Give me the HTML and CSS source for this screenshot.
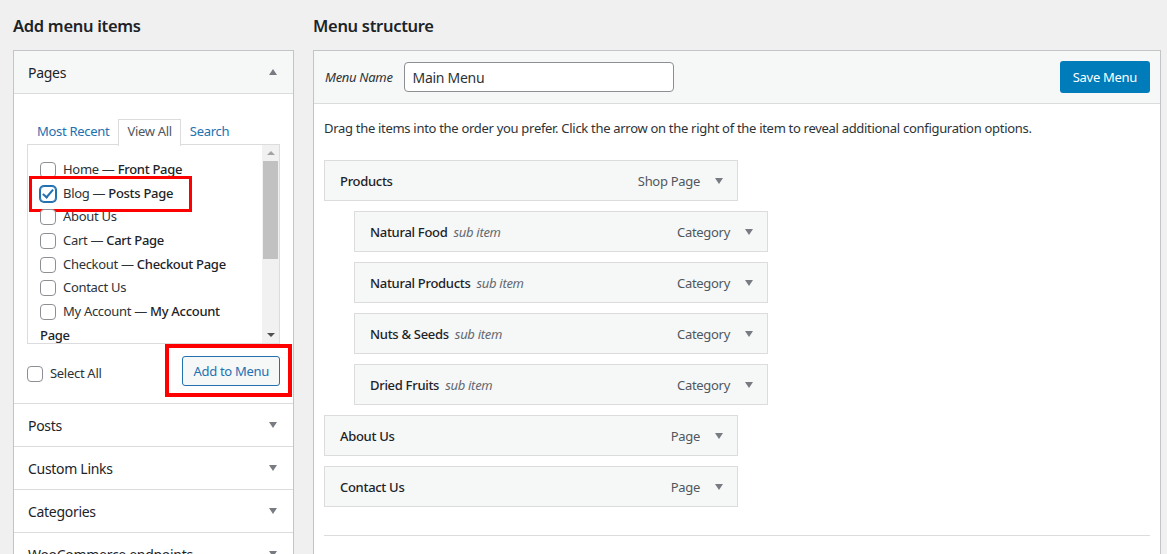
FILE: index.html
```html
<!DOCTYPE html>
<html lang="en">
<head>
    <meta charset="UTF-8">
    <title>Menus</title>
    <link rel="stylesheet" href="styles.css">
</head>
<body>
    <div class="wrap">
        <div class="side">
            <h2 class="col-title">Add menu items</h2>
            <div class="accordion">
                <div class="acc-title open">Pages <span class="arrow up"></span></div>
                <div class="acc-body">
                    <div class="tabs">
                        <span class="tab">Most Recent</span>
                        <span class="tab active">View All</span>
                        <span class="tab">Search</span>
                    </div>
                    <div class="checklist">
                        <ul class="pages">
                            <li><span class="cb"></span>Home — <b>Front Page</b></li>
                            <li class="marked"><span class="cb checked"></span>Blog — <b>Posts Page</b></li>
                            <li><span class="cb"></span>About Us</li>
                            <li><span class="cb"></span>Cart — <b>Cart Page</b></li>
                            <li><span class="cb"></span>Checkout — <b>Checkout Page</b></li>
                            <li><span class="cb"></span>Contact Us</li>
                            <li><span class="cb"></span>My Account — <b>My Account</b><br><b>Page</b></li>
                        </ul>
                        <div class="scrollbar">
                            <span class="sb-arrow sb-up"></span>
                            <span class="sb-thumb"></span>
                            <span class="sb-arrow sb-down"></span>
                        </div>
                    </div>
                    <div class="acc-actions">
                        <label class="select-all"><span class="cb"></span>Select All</label>
                        <div class="marked-btn">
                            <button class="btn-secondary">Add to Menu</button>
                        </div>
                    </div>
                </div>
                <div class="acc-title">Posts <span class="arrow"></span></div>
                <div class="acc-title">Custom Links <span class="arrow"></span></div>
                <div class="acc-title">Categories <span class="arrow"></span></div>
                <div class="acc-title">WooCommerce endpoints <span class="arrow"></span></div>
            </div>
        </div>

        <div class="main">
            <h2 class="col-title">Menu structure</h2>
            <div class="menu-box">
                <div class="menu-head">
                    <span class="menu-name-label">Menu Name</span>
                    <input class="menu-name" type="text" value="Main Menu">
                    <button class="btn-primary">Save Menu</button>
                </div>
                <div class="menu-body">
                    <p class="hint">Drag the items into the order you prefer. Click the arrow on the right of the item to reveal additional configuration options.</p>
                    <ul class="menu-items">
                        <li class="item"><span class="item-title">Products</span><span class="item-type">Shop Page</span><span class="arrow"></span></li>
                        <li class="item sub"><span class="item-title">Natural Food <i>sub item</i></span><span class="item-type">Category</span><span class="arrow"></span></li>
                        <li class="item sub"><span class="item-title">Natural Products <i>sub item</i></span><span class="item-type">Category</span><span class="arrow"></span></li>
                        <li class="item sub"><span class="item-title">Nuts &amp; Seeds <i>sub item</i></span><span class="item-type">Category</span><span class="arrow"></span></li>
                        <li class="item sub"><span class="item-title">Dried Fruits <i>sub item</i></span><span class="item-type">Category</span><span class="arrow"></span></li>
                        <li class="item"><span class="item-title">About Us</span><span class="item-type">Page</span><span class="arrow"></span></li>
                        <li class="item"><span class="item-title">Contact Us</span><span class="item-type">Page</span><span class="arrow"></span></li>
                    </ul>
                    <div class="menu-foot"></div>
                </div>
            </div>
        </div>
    </div>
</body>
</html>
```

FILE: styles.css
```css
body {
    margin: 0;
    background-color: #f0f0f1;
    color: #1d2327;
    font-family: 'Noto Sans', 'Open Sans', sans-serif;
    font-size: 13px;
    letter-spacing: -0.3px;
    overflow: hidden;
}

.wrap {
    display: flex;
    gap: 19px;
    padding: 0 6px 0 13px;
}

.side {
    width: 281px;
    flex-shrink: 0;
}

.main {
    flex: 1;
}

.col-title {
    margin: 0;
    height: 50px;
    display: flex;
    align-items: center;
    font-size: 16.5px;
    font-weight: 600;
}

/* accordion */

.accordion {
    background-color: #fff;
    border: 1px solid #c3c4c7;
    border-bottom: none;
}

.acc-title {
    height: 42px;
    display: flex;
    align-items: center;
    justify-content: space-between;
    padding: 0 16px 0 14px;
    font-size: 14px;
    border-bottom: 1px solid #dcdcde;
}

.acc-title.open {
    background-color: #f6f7f7;
}

.arrow {
    width: 0;
    height: 0;
    border-left: 4px solid transparent;
    border-right: 4px solid transparent;
    border-top: 6px solid #787c82;
}

.arrow.up {
    border-top: none;
    border-bottom: 6px solid #787c82;
}

.acc-body {
    padding: 25px 13px 0;
    border-bottom: 1px solid #dcdcde;
    height: 284px;
}

.tabs {
    display: flex;
    height: 25px;
    padding-left: 1px;
}

.tab {
    padding: 2px 8px 0;
    color: #2271b1;
    border: 1px solid transparent;
    border-bottom: none;
}

.tab.active {
    color: #50575e;
    background-color: #fff;
    border-color: #dcdcde;
    position: relative;
    height: 24px;
    z-index: 1;
    margin-bottom: -1px;
}

.checklist {
    border: 1px solid #dcdcde;
    height: 198px;
    display: flex;
    overflow: hidden;
    background-color: #fff;
}

.pages {
    list-style: none;
    margin: 0;
    padding: 13px 0 0 12px;
    flex: 1;
    color: #2c3338;
}

.pages li {
    height: 23.7px;
    line-height: 23.7px;
    white-space: nowrap;
}

.pages b {
    font-weight: 500;
    color: #1d2327;
}

.cb {
    display: inline-block;
    width: 16px;
    height: 16px;
    box-sizing: border-box;
    border: 1px solid #8c8f94;
    border-radius: 4px;
    background-color: #fff;
    vertical-align: -4px;
    margin-right: 7px;
    position: relative;
}

.cb.checked {
    border-color: #2271b1;
    box-shadow: 0 0 0 1px #2271b1;
}

.cb.checked::after {
    content: "";
    position: absolute;
    left: 4px;
    top: 0px;
    width: 4px;
    height: 9px;
    border-right: 2px solid #2271b1;
    border-bottom: 2px solid #2271b1;
    transform: rotate(40deg);
}

.marked {
    position: relative;
}

.marked::after {
    content: "";
    position: absolute;
    left: -11px;
    top: -6px;
    width: 157px;
    height: 30px;
    border: 3px solid #f00;
}

.scrollbar {
    width: 17px;
    background-color: #f1f1f1;
    display: flex;
    flex-direction: column;
    align-items: center;
}

.sb-arrow {
    width: 0;
    height: 0;
    border-left: 4px solid transparent;
    border-right: 4px solid transparent;
    margin: 6px 0;
}

.sb-up {
    border-bottom: 4px solid #a3a3a3;
}

.sb-down {
    border-top: 4px solid #505050;
    margin-top: auto;
}

.sb-thumb {
    width: 15px;
    height: 98px;
    background-color: #c1c1c1;
}

.acc-actions {
    display: flex;
    justify-content: space-between;
    align-items: center;
    height: 54px;
}

.select-all {
    color: #2c3338;
    padding-top: 3px;
}

.marked-btn {
    position: relative;
}

.marked-btn::after {
    content: "";
    position: absolute;
    left: -17px;
    top: -12px;
    right: -12px;
    bottom: -11px;
    border: 4px solid #f00;
}

.btn-secondary {
    font-family: inherit;
    font-size: 13px;
    letter-spacing: inherit;
    color: #2271b1;
    background-color: #f6f7f7;
    border: 1px solid #2271b1;
    border-radius: 3px;
    height: 30px;
    padding: 0 10px;
}

/* menu structure */

.menu-box {
    background-color: #fff;
    border: 1px solid #c3c4c7;
    height: 520px;
}

.menu-head {
    background-color: #f6f7f7;
    border-bottom: 1px solid #dcdcde;
    height: 52px;
    display: flex;
    align-items: center;
    padding: 0 10px 0 11px;
}

.menu-name-label {
    font-style: italic;
    color: #2c3338;
    margin-right: 11px;
}

.menu-name {
    width: 270px;
    height: 30px;
    box-sizing: border-box;
    border: 1px solid #8c8f94;
    border-radius: 4px;
    padding: 0 8px;
    font-family: inherit;
    font-size: 14px;
    letter-spacing: inherit;
    color: #2c3338;
}

.btn-primary {
    margin-left: auto;
    font-family: inherit;
    font-size: 13px;
    letter-spacing: inherit;
    color: #fff;
    background-color: #007cba;
    border: none;
    border-radius: 3px;
    height: 32px;
    padding: 0 13px;
}

.menu-body {
    padding: 0 10px;
}

.hint {
    margin: 15px 0 23px;
    color: #2c3338;
}

.menu-items {
    list-style: none;
    margin: 0;
    padding: 0;
}

.item {
    width: 414px;
    height: 41px;
    box-sizing: border-box;
    display: flex;
    align-items: center;
    background-color: #f6f7f7;
    border: 1px solid #dcdcde;
    padding: 0 14px 0 15px;
    margin-bottom: 10px;
}

.item.sub {
    margin-left: 30px;
}

.item-title {
    font-weight: 500;
    flex: 1;
}

.item-title i {
    font-weight: 400;
    color: #646970;
    margin-left: 3px;
}

.item-type {
    color: #50575e;
    margin-right: 15px;
}

.menu-foot {
    border-top: 1px solid #dcdcde;
    margin-top: 28px;
}
```
